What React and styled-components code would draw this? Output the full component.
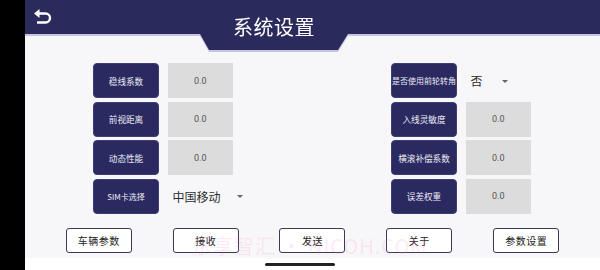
import React from "react";
import styled, { createGlobalStyle } from "styled-components";

const Global = createGlobalStyle`
  html, body { margin: 0; padding: 0; background: #000; }
  body { width: 600px; height: 270px; overflow: hidden; font-family: "Noto Sans CJK SC", "Noto Sans", sans-serif; }
  * { box-sizing: border-box; }
`;

const Screen = styled.div`
  position: relative;
  display: flex;
  width: 600px;
  height: 270px;
  background: #000;
`;

const Side = styled.div`
  width: 25px;
  flex: none;
  background: #000;
`;

const Main = styled.div`
  flex: 1;
  display: flex;
  flex-direction: column;
  background: #f7f7f9;
`;

const HeaderWrap = styled.div`
  filter: drop-shadow(0 2px 0 #c6c6e2);
`;

const Header = styled.header`
  height: 50px;
  display: flex;
  align-items: flex-start;
  background: #2b2a5d;
  clip-path: polygon(0 0, 100% 0, 100% 34px, 323px 34px, 313px 50px, 184px 50px, 175px 34px, 0 34px);
`;

const Back = styled.button`
  margin: 8px 0 0 8px;
  width: 20px;
  height: 17px;
  padding: 0;
  border: 0;
  background: transparent;
  display: flex;
`;

const Title = styled.h1`
  margin: 0 0 0 147px;
  width: 148px;
  padding-top: 14px;
  text-align: center;
  font-size: 20px;
  line-height: 26px;
  font-weight: 400;
  color: #fff;
  letter-spacing: 0.5px;
`;

const Columns = styled.div`
  margin: 13px 0 0 68px;
  display: grid;
  grid-template-columns: 140px 140px;
  column-gap: 158px;
`;

const Column = styled.div`
  display: flex;
  flex-direction: column;
  gap: 3.5px;
`;

const Row = styled.div`
  display: flex;
  align-items: center;
  gap: 8.5px;
  height: 35px;
`;

const Label = styled.div`
  width: 66px;
  height: 35px;
  flex: none;
  display: flex;
  align-items: center;
  justify-content: center;
  background: #2a2960;
  border: 1px solid #3e3d74;
  border-radius: 4px;
  color: #ecebf5;
  font-size: ${(p) => (p.$small ? "8px" : "8.6px")};
  white-space: nowrap;
`;

const Value = styled.div`
  width: 66px;
  height: 35px;
  display: flex;
  align-items: center;
  justify-content: center;
  background: #dcdcdc;
  color: #555;
  font-family: "Roboto", "Noto Sans", sans-serif;
  font-size: 9px;
`;

const Spinner = styled.div`
  display: flex;
  align-items: center;
  padding-left: 5px;
  gap: ${(p) => p.$gap}px;
  color: #2e2e2e;
  font-size: 12px;
  white-space: nowrap;
`;

const Caret = styled.span`
  width: 0;
  height: 0;
  border-left: 3px solid transparent;
  border-right: 3px solid transparent;
  border-top: 3.5px solid #666;
  margin-top: 1px;
`;

const Buttons = styled.div`
  margin-top: 14.5px;
  display: flex;
  justify-content: space-evenly;
`;

const Btn = styled.button`
  width: 66px;
  height: 25px;
  padding: 0;
  background: #fff;
  border: 1.5px solid #3b3a55;
  border-radius: 3px;
  color: #222;
  font-family: "Noto Sans CJK SC", sans-serif;
  font-size: 10px;
  letter-spacing: 0.5px;
`;

const HomeBand = styled.div`
  margin-top: auto;
  height: 12px;
  background: #fff;
  display: flex;
  justify-content: center;
  align-items: center;
  padding-right: 25px;
`;

const Indicator = styled.div`
  width: 70px;
  height: 3px;
  border-radius: 2px;
  background: #222;
`;

const Watermark = styled.div`
  position: absolute;
  left: 192px;
  top: 231px;
  font-size: 20px;
  color: rgba(255, 120, 200, 0.16);
  white-space: nowrap;
  pointer-events: none;
  letter-spacing: 1px;
`;

const left = [
  { label: "稳线系数", value: "0.0" },
  { label: "前视距离", value: "0.0" },
  { label: "动态性能", value: "0.0" },
  { label: "SIM卡选择", select: "中国移动", small: true },
];
const right = [
  { label: "是否使用前轮转角", select: "否", small: true },
  { label: "入线灵敏度", value: "0.0" },
  { label: "横滚补偿系数", value: "0.0" },
  { label: "误差权重", value: "0.0" },
];

const Field = ({ f }) => (
  <Row>
    <Label $small={f.small}>{f.label}</Label>
    {f.select ? (
      <Spinner $gap={f.select.length > 1 ? 16 : 19}>
        {f.select}
        <Caret />
      </Spinner>
    ) : (
      <Value>{f.value}</Value>
    )}
  </Row>
);

export default function App() {
  return (
    <>
      <Global />
      <Screen>
        <Side />
        <Main>
          <HeaderWrap>
            <Header>
              <Back aria-label="back">
                <svg width="20" height="17" viewBox="0 0 20 17">
                  <path d="M5 5.5 H12.5 A4.5 4.5 0 0 1 12.5 14.5 H4" fill="none" stroke="#fff" strokeWidth="2.4" />
                  <path d="M1 5.5 L6.5 1 V10 Z" fill="#fff" />
                </svg>
              </Back>
              <Title>系统设置</Title>
            </Header>
          </HeaderWrap>
          <Columns>
            <Column>
              {left.map((f) => (
                <Field key={f.label} f={f} />
              ))}
            </Column>
            <Column>
              {right.map((f) => (
                <Field key={f.label} f={f} />
              ))}
            </Column>
          </Columns>
          <Buttons>
            <Btn>车辆参数</Btn>
            <Btn>接收</Btn>
            <Btn>发送</Btn>
            <Btn>关于</Btn>
            <Btn>参数设置</Btn>
          </Buttons>
          <HomeBand>
            <Indicator />
          </HomeBand>
        </Main>
        <Watermark>乐享智汇 · NICOH.COM</Watermark>
      </Screen>
    </>
  );
}
